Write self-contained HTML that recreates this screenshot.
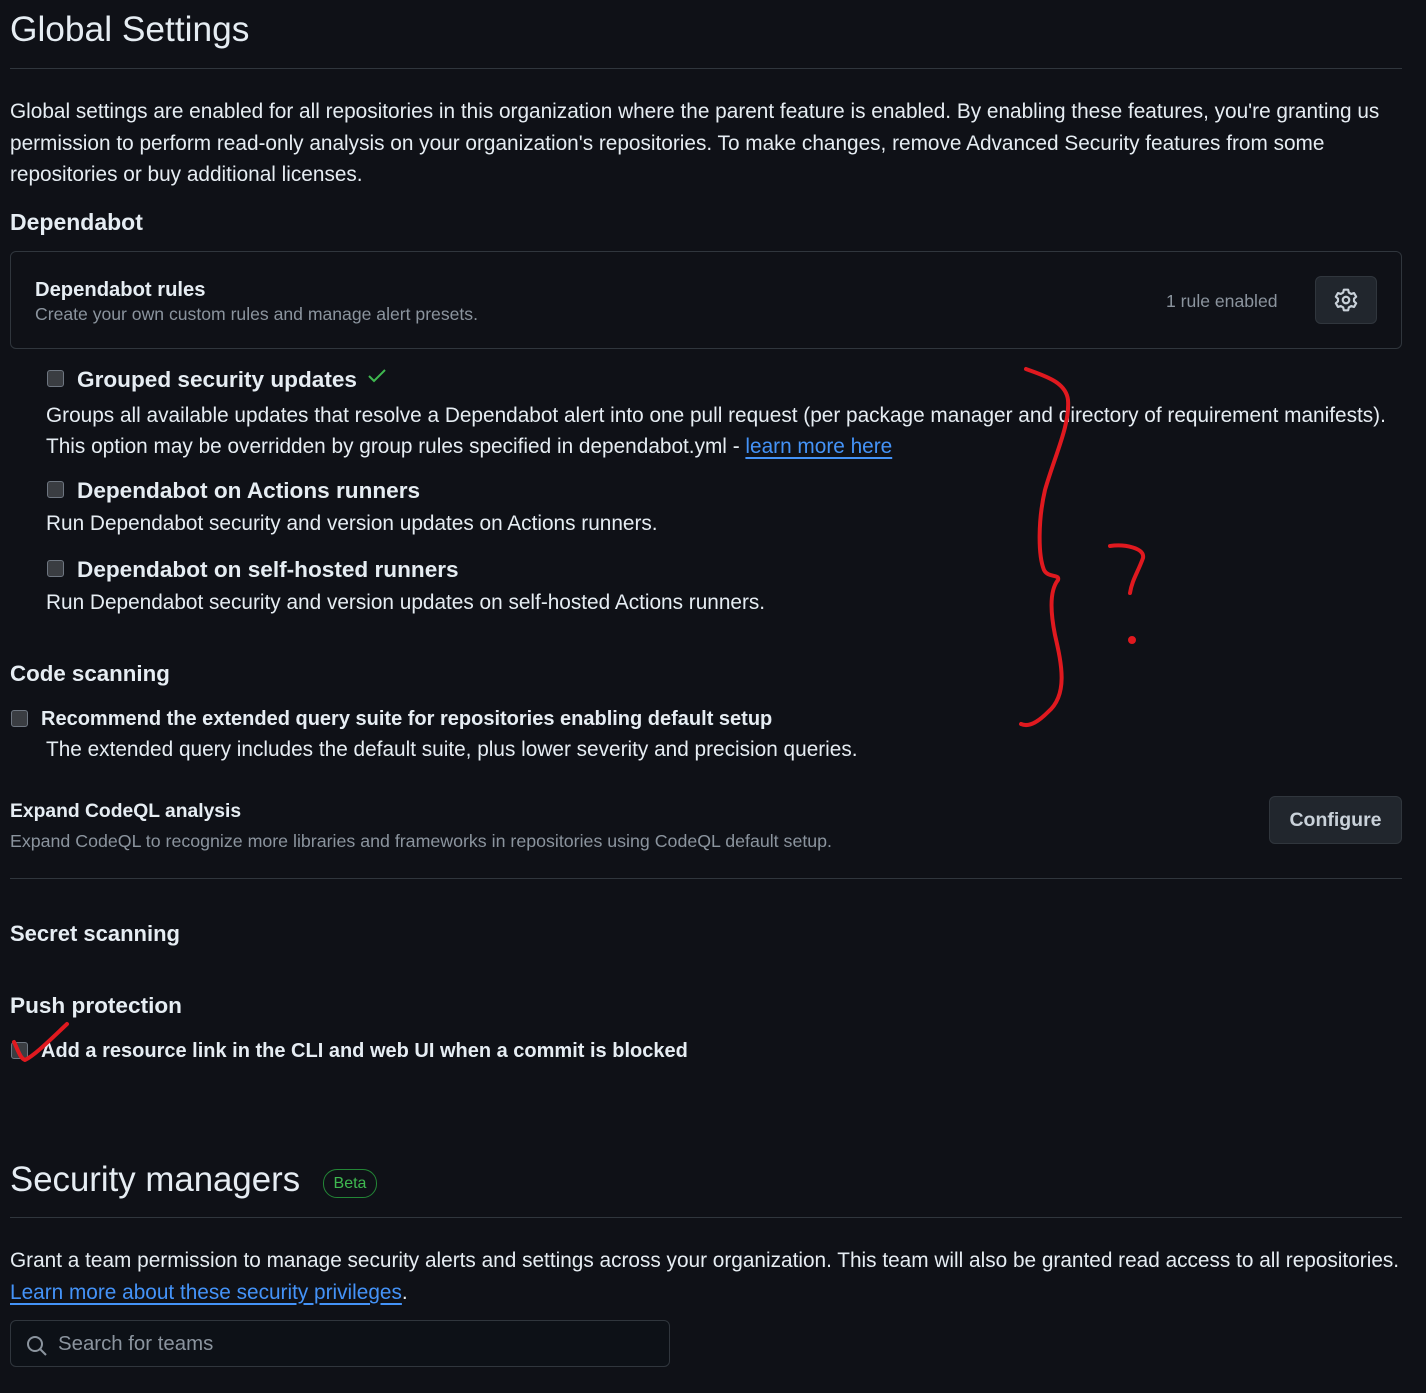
<!DOCTYPE html>
<html><head><meta charset="utf-8"><style>
body{margin:0;background:#0f1117;width:1426px;height:1393px;overflow:hidden;font-family:"Liberation Sans",sans-serif;color:#e6edf3;position:relative}
.a{position:absolute;white-space:nowrap}
.t{font-size:20.8px}
.b{font-weight:bold}
.m{color:#8b949e}
.cb{position:absolute;width:15px;height:15px;border:1.5px solid #6e7681;background:#3a3d42;border-radius:3px}
.hr{position:absolute;left:10px;width:1392px;height:1px;background:#30363d}
a{color:#4493f8;text-decoration:underline;text-underline-offset:4px}
</style></head><body>
<div class="a" style="left:10px;top:10px;font-size:35.3px">Global Settings</div>
<div class="hr" style="top:68px"></div>
<div class="a t" style="left:10px;top:96px;line-height:31.5px">Global settings are enabled for all repositories in this organization where the parent feature is enabled. By enabling these features, you're granting us<br>permission to perform read-only analysis on your organization's repositories. To make changes, remove Advanced Security features from some<br>repositories or buy additional licenses.</div>
<div class="a b" style="left:10px;top:209px;font-size:23px">Dependabot</div>
<div class="a" style="left:10px;top:251px;width:1390px;height:96px;border:1px solid #30363d;border-radius:6px"></div>
<div class="a b" style="left:35px;top:279px;font-size:20.2px">Dependabot rules</div>
<div class="a m" style="left:35px;top:304px;font-size:17.6px">Create your own custom rules and manage alert presets.</div>
<div class="a m" style="left:1166px;top:291px;font-size:17.6px">1 rule enabled</div>
<div class="a" style="left:1315px;top:276px;width:60px;height:46px;background:#21262d;border:1px solid #30363d;border-radius:6px"></div>
<svg class="a" style="left:1333px;top:287px" width="26" height="26" viewBox="0 0 24 24" fill="none" stroke="#c9d1d9" stroke-width="2" stroke-linejoin="round"><path d="M10 2.5h4l.6 2.6 2.2 1.3 2.6-.8 2 3.4-2 1.8v2.4l2 1.8-2 3.4-2.6-.8-2.2 1.3-.6 2.6h-4l-.6-2.6-2.2-1.3-2.6.8-2-3.4 2-1.8v-2.4l-2-1.8 2-3.4 2.6.8 2.2-1.3z"/><circle cx="12" cy="12" r="3"/></svg>

<div class="cb" style="left:47px;top:370px"></div>
<div class="a b" style="left:77px;top:367px;font-size:22.6px">Grouped security updates</div>
<svg class="a" style="left:367px;top:368px" width="20" height="16"><path d="M2 8l5 5 11-11" stroke="#3fb950" stroke-width="2" fill="none"/></svg>
<div class="a t" style="left:46px;top:400px;line-height:31px">Groups all available updates that resolve a Dependabot alert into one pull request (per package manager and directory of requirement manifests).<br>This option may be overridden by group rules specified in dependabot.yml - <a>learn more here</a></div>
<div class="cb" style="left:47px;top:481px"></div>
<div class="a b" style="left:77px;top:478px;font-size:22.6px">Dependabot on Actions runners</div>
<div class="a t" style="left:46px;top:512px">Run Dependabot security and version updates on Actions runners.</div>
<div class="cb" style="left:47px;top:560px"></div>
<div class="a b" style="left:77px;top:557px;font-size:22.6px">Dependabot on self-hosted runners</div>
<div class="a t" style="left:46px;top:591px">Run Dependabot security and version updates on self-hosted Actions runners.</div>

<div class="a b" style="left:10px;top:661px;font-size:22.3px">Code scanning</div>
<div class="cb" style="left:11px;top:710px"></div>
<div class="a b" style="left:41px;top:708px;font-size:20px">Recommend the extended query suite for repositories enabling default setup</div>
<div class="a t" style="left:46px;top:738px">The extended query includes the default suite, plus lower severity and precision queries.</div>
<div class="a b" style="left:10px;top:801px;font-size:19.3px">Expand CodeQL analysis</div>
<div class="a m" style="left:10px;top:831px;font-size:17.8px">Expand CodeQL to recognize more libraries and frameworks in repositories using CodeQL default setup.</div>
<div class="a" style="left:1269px;top:796px;width:131px;height:46px;background:#21262d;border:1px solid #30363d;border-radius:6px;font-size:19.5px;font-weight:bold;text-align:center;line-height:46px;color:#c9d1d9">Configure</div>
<div class="hr" style="top:878px"></div>

<div class="a b" style="left:10px;top:921px;font-size:22px">Secret scanning</div>
<div class="a b" style="left:10px;top:993px;font-size:22.6px">Push protection</div>
<div class="cb" style="left:11px;top:1042px"></div>
<div class="a b" style="left:41px;top:1040px;font-size:20px">Add a resource link in the CLI and web UI when a commit is blocked</div>

<div class="a" style="left:10px;top:1160px;font-size:34.8px">Security managers</div>
<div class="a" style="left:323px;top:1169px;width:52px;height:27px;border:1px solid #238636;border-radius:14px;color:#3fb950;font-size:16px;text-align:center;line-height:27px">Beta</div>
<div class="hr" style="top:1217px"></div>
<div class="a t" style="left:10px;top:1245px;line-height:31.5px">Grant a team permission to manage security alerts and settings across your organization. This team will also be granted read access to all repositories.<br><a>Learn more about these security privileges</a>.</div>
<div class="a" style="left:10px;top:1320px;width:658px;height:45px;background:#0d1117;border:1px solid #30363d;border-radius:6px"></div>
<svg class="a" style="left:26px;top:1335px" width="22" height="22" viewBox="0 0 22 22" fill="none" stroke="#8b949e" stroke-width="2"><circle cx="9" cy="9" r="7"/><path d="M14 14l6 6"/></svg>
<div class="a m" style="left:58px;top:1333px;font-size:20.4px">Search for teams</div>

<svg class="a" style="left:0;top:0" width="1426" height="1393" fill="none" stroke="#e0191f" stroke-width="4" stroke-linecap="round" stroke-linejoin="round">
<path d="M1026 369C1045 376 1066 382 1068 400C1070 425 1055 455 1045 490C1038 520 1038 555 1044 570C1048 578 1060 574 1058 580C1050 590 1050 610 1055 635C1062 665 1068 695 1048 712C1040 720 1030 728 1021 724"/>
<path d="M1110 546C1125 544 1145 548 1143 558C1138 572 1132 580 1130 593"/>
<circle cx="1132" cy="640" r="2" fill="#e0191f"/>
<path d="M14 1042C18 1050 20 1058 25 1060C35 1055 50 1040 67 1024"/>
</svg>
</body></html>
